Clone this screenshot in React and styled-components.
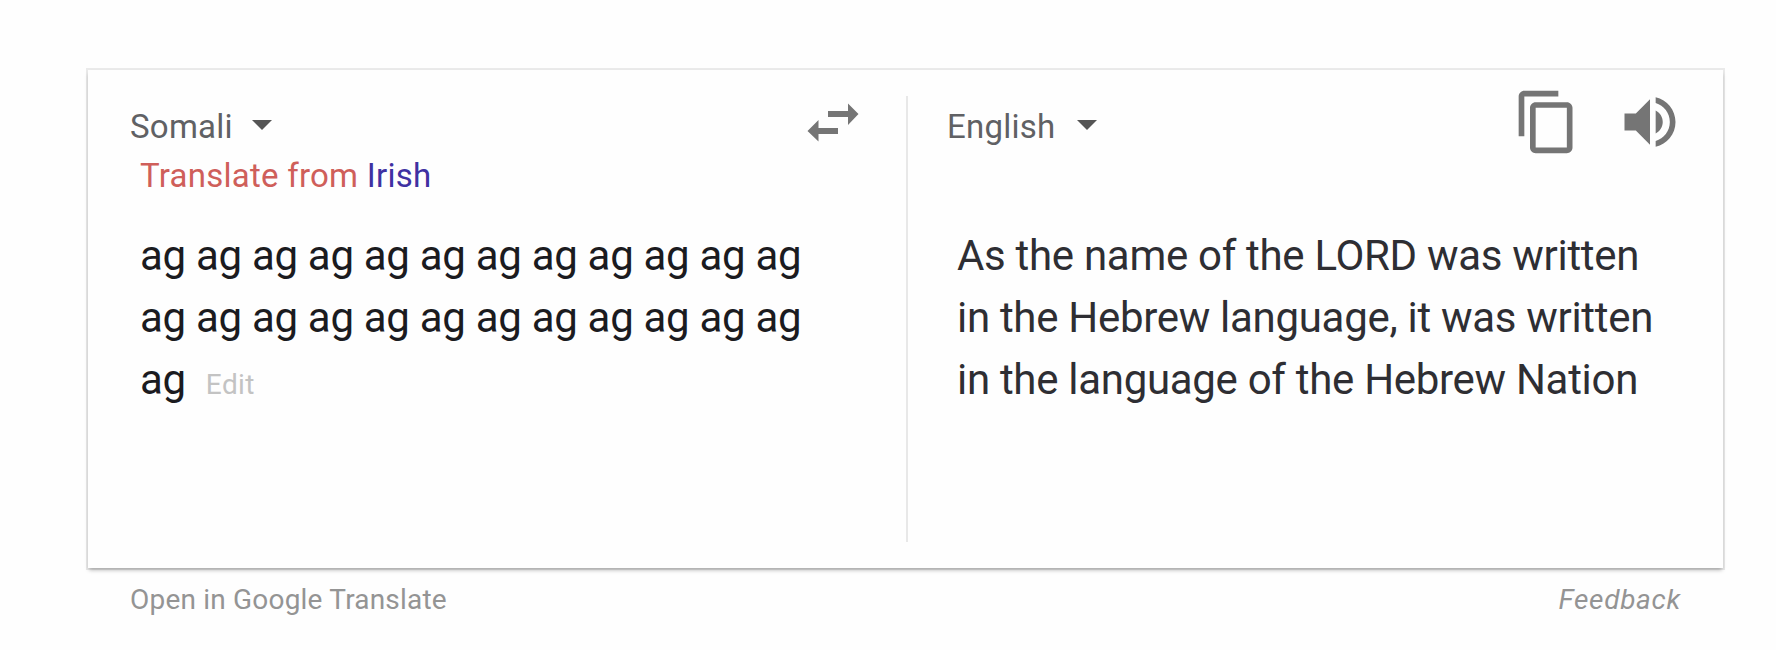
import React from "react";
import styled, { createGlobalStyle } from "styled-components";

const GlobalStyle = createGlobalStyle`
  * { box-sizing: border-box; }
  body { margin: 0; background: #fefefe; font-family: Roboto, "Liberation Sans", sans-serif; }
`;

const Page = styled.main`
  width: 1776px;
  height: 650px;
  padding: 70px 53px 0 88px;
  overflow: hidden;
`;

const Card = styled.section`
  display: flex;
  height: 498px;
  background: #fefefe;
  box-shadow: 0 0 0 2px rgba(0, 0, 0, 0.08), 0 3px 4px -1px rgba(0, 0, 0, 0.3);
`;

const Panel = styled.div`
  width: ${(p) => p.$width}px;
  padding: 32px 0 0 ${(p) => p.$indent}px;
`;

const Divider = styled.div`
  width: 2px;
  margin: 26px 0;
  background: #e8e8e8;
`;

const Header = styled.div`
  display: flex;
  justify-content: space-between;
  height: 49px;
  padding-right: ${(p) => p.$end}px;
`;

const Language = styled.button`
  display: flex;
  align-items: center;
  gap: ${(p) => p.$gap}px;
  height: 49px;
  padding: 0;
  border: 0;
  background: none;
  color: #606164;
  font: 33px/49px Roboto, "Liberation Sans", sans-serif;
  letter-spacing: 0.25px;
`;

const Caret = styled.span`
  margin-top: -4px;
  border: solid transparent;
  border-width: 10px 10.5px 0;
  border-top-color: #555;
`;

const SwapIcon = styled.svg`
  width: 52px;
  height: 40px;
  margin-top: 1px;
  fill: #757575;
`;

const Actions = styled.div`
  display: flex;
  gap: 35px;
  margin-top: -14px;
`;

const ActionIcon = styled.svg`
  width: 68px;
  height: 68px;
  fill: #757575;
`;

const Suggestion = styled.div`
  height: 49px;
  padding-left: 10px;
  color: #cf5f5a;
  font-size: 33px;
  line-height: 49px;
  letter-spacing: 0.25px;
`;

const SuggestionLink = styled.a`
  color: #3f31a2;
`;

const Passage = styled.div`
  margin-top: ${(p) => p.$top}px;
  padding-left: 10px;
  color: ${(p) => p.$color};
  font-size: 42px;
  line-height: 62px;
  letter-spacing: -0.3px;
  white-space: nowrap;
`;

const Line = styled.div``;

const Edit = styled.a`
  margin-left: 20px;
  color: #c3c3c3;
  font-size: 28px;
  line-height: 1;
  letter-spacing: 0.4px;
`;

const Footer = styled.footer`
  display: flex;
  justify-content: space-between;
  padding: 12px 42px 0;
  color: #949494;
  font-size: 28px;
  line-height: 40px;
`;

const FooterLink = styled.a`
  font-style: ${(p) => (p.$italic ? "italic" : "normal")};
  letter-spacing: ${(p) => (p.$italic ? 0.7 : 0.2)}px;
`;

const repeated = Array(12).fill("ag").join(" ");

export default function App() {
  return (
    <>
      <GlobalStyle />
      <Page>
        <Card>
          <Panel $width={817.5} $indent={42}>
            <Header $end={46.5}>
              <Language $gap={19}>
                Somali
                <Caret />
              </Language>
              <SwapIcon viewBox="0 0 52 40">
                <path d="M21 8h20V0.5L51.500 11 41 22V14H21z M31 25v6H11.500v7.500L0.500 28 11.500 17v8z" />
              </SwapIcon>
            </Header>
            <Suggestion>
              Translate from <SuggestionLink>Irish</SuggestionLink>
            </Suggestion>
            <Passage $color="#1b1b1f" $top={25}>
              <Line>{repeated}</Line>
              <Line>{repeated}</Line>
              <Line>
                ag<Edit>Edit</Edit>
              </Line>
            </Passage>
          </Panel>
          <Divider />
          <Panel $width={815.5} $indent={39.5}>
            <Header $end={39.5}>
              <Language $gap={21}>
                English
                <Caret />
              </Language>
              <Actions>
                <ActionIcon viewBox="0 0 24 24">
                  <path d="M16 1H4c-1.1 0-2 .9-2 2v14h2V3h12V1zm3 4H8c-1.1 0-2 .9-2 2v14c0 1.1.9 2 2 2h11c1.1 0 2-.9 2-2V7c0-1.1-.9-2-2-2zm0 16H8V7h11v14z" />
                </ActionIcon>
                <ActionIcon viewBox="0 0 24 24">
                  <path d="M3 9v6h4l5 5V4L7 9H3zm13.500 3c0-1.770-1.020-3.290-2.500-4.030v8.050c1.480-.730 2.500-2.250 2.500-4.020zM14 3.230v2.060c2.890.860 5 3.540 5 6.710s-2.110 5.850-5 6.710v2.060c4.010-.910 7-4.490 7-8.770s-2.990-7.860-7-8.770z" />
                </ActionIcon>
              </Actions>
            </Header>
            <Passage $color="#2e2e33" $top={74}>
              <Line>As the name of the LORD was written</Line>
              <Line>in the Hebrew language, it was written</Line>
              <Line>in the language of the Hebrew Nation</Line>
            </Passage>
          </Panel>
        </Card>
        <Footer>
          <FooterLink>Open in Google Translate</FooterLink>
          <FooterLink $italic>Feedback</FooterLink>
        </Footer>
      </Page>
    </>
  );
}
